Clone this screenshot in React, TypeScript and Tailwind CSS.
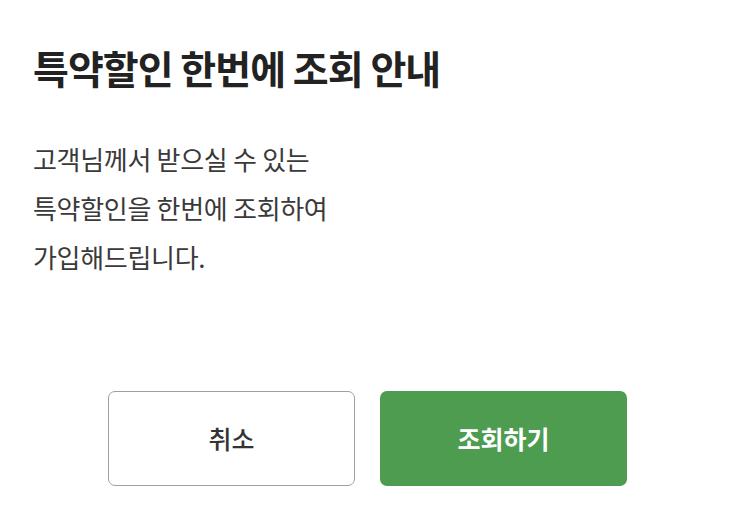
import React from "react";

export default function App() {
  const font = { fontFamily: '"Noto Sans CJK KR", "Noto Sans", sans-serif' };
  return (
    <div className="w-[746px] h-[528px] bg-white relative" style={font}>
      <div className="pl-[33px] pt-[41px]">
        <h1 className="text-[39px] leading-[52px] font-bold text-[#222222] tracking-[-1px]">
          특약할인 한번에 조회 안내
        </h1>
        <div className="mt-[41px] text-[26px] leading-[49px] text-[#3a3a3a] tracking-[-0.3px]">
          <p>고객님께서 받으실 수 있는</p>
          <p>특약할인을 한번에 조회하여</p>
          <p>가입해드립니다.</p>
        </div>
      </div>
      <div className="flex gap-[25px] mt-[110px] pl-[108px]">
        <button className="w-[247px] h-[95px] rounded-[7px] border-[1.5px] border-[#a0a0a0] bg-white text-[25px] font-medium text-[#333333]">
          취소
        </button>
        <button className="w-[247px] h-[95px] rounded-[7px] bg-[#4d9c50] text-[25px] font-bold text-white">
          조회하기
        </button>
      </div>
    </div>
  );
}
